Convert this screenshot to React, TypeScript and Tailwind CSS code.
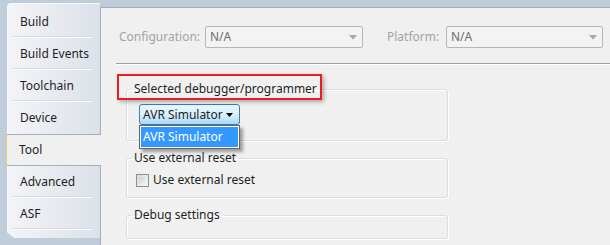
import React from "react";

const font = { fontFamily: '"Noto Sans", "Open Sans", sans-serif' };

function Tab({ label, sep = true }: { label: string; sep?: boolean }) {
  return (
    <div className="relative h-[32px] flex items-center pl-[12px] text-[12px] text-[#1e1e1e]">
      {label}
      {sep && (
        <div className="absolute bottom-0 left-[4px] w-[80px] h-[2px] border-t border-[#d3d9e2] border-b border-b-white" />
      )}
    </div>
  );
}

function DisabledSelect({ w }: { w: string }) {
  return (
    <div
      className={`${w} h-[22px] rounded-[2px] border border-[#b3b7bb] bg-[#f3f3f3] flex items-center pl-[4px] pr-[5px] text-[12px] text-[#6d6d6d]`}
    >
      <span className="flex-1">N/A</span>
      <svg width="8" height="5" viewBox="0 0 8 5">
        <path d="M0 0 H8 L4 4.5 Z" fill="#a9a9a9" />
      </svg>
    </div>
  );
}

export default function App() {
  return (
    <div
      className="w-[610px] h-[245px] overflow-hidden flex bg-[#bfcddb] text-[#1e1e1e]"
      style={font}
    >
      {/* tab strip */}
      <div className="w-[100px] shrink-0 pt-[3px] pl-[6px] relative z-10 flex flex-col">
        <div className="h-[131px] ml-[1px] rounded-tl-[4px] border-l border-t border-[#f6f8fb] bg-gradient-to-r from-[#f3f4f7] to-[#dce1e9] pt-[2px]">
          <Tab label="Build" />
          <Tab label="Build Events" />
          <Tab label="Toolchain" />
          <Tab label="Device" sep={false} />
        </div>
        <div className="w-[95px] h-[32px] rounded-l-[2px] border-t border-b border-[#a3afbe] border-l border-l-[#f5c866] bg-[#f0f0f0] flex items-center pl-[12px] text-[12px]">
          Tool
        </div>
        <div className="h-[72px] ml-[1px] border-l border-[#f6f8fb] bg-gradient-to-r from-[#f3f4f7] to-[#dce1e9] [clip-path:polygon(0_0,100%_0,100%_100%,7px_100%,0_92%)]">
          <Tab label="Advanced" />
          <Tab label="ASF" />
        </div>
      </div>
      {/* main panel */}
      <div className="flex-1 mt-[7px] border-l border-t border-[#a3afbe] bg-[#f0f0f0] relative">
        <div className="pt-[18px] pl-[18px]">
          <div className="flex items-center h-[22px] text-[12px]">
            <span className="w-[86px] text-[#a3a3a3]">Configuration:</span>
            <DisabledSelect w="w-[158px]" />
            <span className="ml-[24px] w-[59px] text-[#a3a3a3]">Platform:</span>
            <DisabledSelect w="w-[157px]" />
          </div>
          <div className="mt-[15px] -ml-[3px] h-[2px] border-t border-[#a0a0a0] border-b border-b-white" />

          <div className="ml-[7px] w-[322px] text-[12px]">
            <fieldset className="mt-[17px] h-[59px] rounded-[3px] border border-[#d5dfe5] shadow-[inset_1px_1px_0_#fff,1px_1px_0_#fff]">
              <legend className="ml-[4px] px-[3px] leading-[14px]">Selected debugger/programmer</legend>
              <div className="relative ml-[12px] mt-[8px] w-[101px]">
                <div className="h-[21px] rounded-[3px] border border-[#3c7fb1] bg-gradient-to-b from-[#eaf6fd] via-[#d9f0fc] to-[#a7d9f5] flex items-center pl-[3px] pr-[6px]">
                  <span className="flex-1">AVR Simulator</span>
                  <svg width="7" height="4" viewBox="0 0 7 4">
                    <path d="M0 0 H7 L3.5 4 Z" fill="#000" />
                  </svg>
                </div>
                <div className="absolute left-0 top-[21px] w-[101px] h-[24px] border border-[#646464] bg-white p-px shadow-[3px_3px_3px_rgba(0,0,0,0.35)] z-20">
                  <div className="h-full bg-[#3399ff] text-white flex items-center pl-[2px]">AVR Simulator</div>
                </div>
              </div>
            </fieldset>

            <fieldset className="mt-[10px] h-[47px] rounded-[3px] border border-[#d5dfe5] shadow-[inset_1px_1px_0_#fff,1px_1px_0_#fff]">
              <legend className="ml-[4px] px-[3px] leading-[14px]">Use external reset</legend>
              <label className="flex items-center ml-[9px] mt-[6px] gap-[4px]">
                <span className="w-[13px] h-[13px] border border-[#8e8f8f] bg-gradient-to-br from-[#dcdcdc] to-[#f6f6f6] p-[2px] inline-block">
                  <span className="block w-full h-full bg-gradient-to-br from-[#cbcfd5] to-[#f4f5f6]" />
                </span>
                <span>Use external reset</span>
              </label>
            </fieldset>

            <fieldset className="mt-[10px] h-[31px] rounded-[3px] border border-[#d5dfe5] shadow-[inset_1px_1px_0_#fff,1px_1px_0_#fff]">
              <legend className="ml-[4px] px-[3px] leading-[14px]">Debug settings</legend>
            </fieldset>
          </div>
        </div>

        {/* red annotation rectangle */}
        <div className="absolute left-[16px] top-[66px] w-[205px] h-[26px] border-2 border-[#ea1c24] shadow-[2px_2px_4px_rgba(0,0,0,0.3)] pointer-events-none" />
      </div>
    </div>
  );
}
